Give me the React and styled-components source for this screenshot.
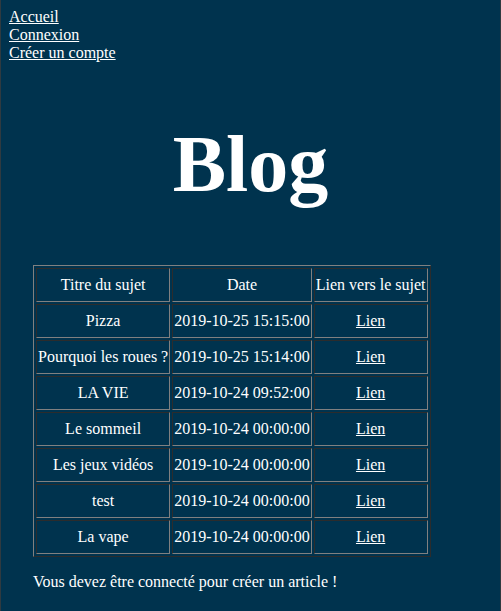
import React from "react";
import styled, { createGlobalStyle } from "styled-components";

const Global = createGlobalStyle`
  html { margin: 0; padding: 0; }
  body {
    margin: 0;
    padding: 8px;
    min-height: 100vh;
    box-sizing: border-box;
    background: #00334e;
    color: #ffffff;
    font-family: "Liberation Serif", "Times New Roman", serif;
    font-size: 16px;
    border-left: 1px solid #2f3a40;
    border-right: 1px solid #2f3a40;
  }
`;

const Nav = styled.nav`
  display: flex;
  flex-direction: column;
  align-items: flex-start;
`;

const NavLink = styled.a`
  color: #ffffff;
  text-decoration: underline;
  line-height: normal;
`;

const Title = styled.h1`
  margin: 57px 0 55px;
  text-align: center;
  font-size: 80px;
  font-weight: bold;
`;

const Section = styled.section`
  margin: 0 24px;
`;

const Table = styled.table`
  border: 1px outset gray;
  border-spacing: 2px;
  color: #ffffff;
`;

const Cell = styled.td`
  border: 1px inset gray;
  padding: 7px 1px;
  text-align: center;
  font-weight: normal;
  white-space: nowrap;
`;

const CellLink = styled.a`
  color: #ffffff;
  text-decoration: underline;
`;

const Notice = styled.p`
  margin: 16px 0;
`;

const rows = [
  ["Pizza", "2019-10-25 15:15:00"],
  ["Pourquoi les roues ?", "2019-10-25 15:14:00"],
  ["LA VIE", "2019-10-24 09:52:00"],
  ["Le sommeil", "2019-10-24 00:00:00"],
  ["Les jeux vidéos", "2019-10-24 00:00:00"],
  ["test", "2019-10-24 00:00:00"],
  ["La vape", "2019-10-24 00:00:00"],
];

export default function App() {
  return (
    <>
      <Global />
      <Nav>
        <NavLink href="#">Accueil</NavLink>
        <NavLink href="#">Connexion</NavLink>
        <NavLink href="#">Créer un compte</NavLink>
      </Nav>
      <Title>Blog</Title>
      <Section>
        <Table>
          <thead>
            <tr>
              <Cell as="th">Titre du sujet</Cell>
              <Cell as="th">Date</Cell>
              <Cell as="th">Lien vers le sujet</Cell>
            </tr>
          </thead>
          <tbody>
            {rows.map(([t, d]) => (
              <tr key={t}>
                <Cell>{t}</Cell>
                <Cell>{d}</Cell>
                <Cell>
                  <CellLink href="#">Lien</CellLink>
                </Cell>
              </tr>
            ))}
          </tbody>
        </Table>
        <Notice>Vous devez être connecté pour créer un article !</Notice>
      </Section>
    </>
  );
}
